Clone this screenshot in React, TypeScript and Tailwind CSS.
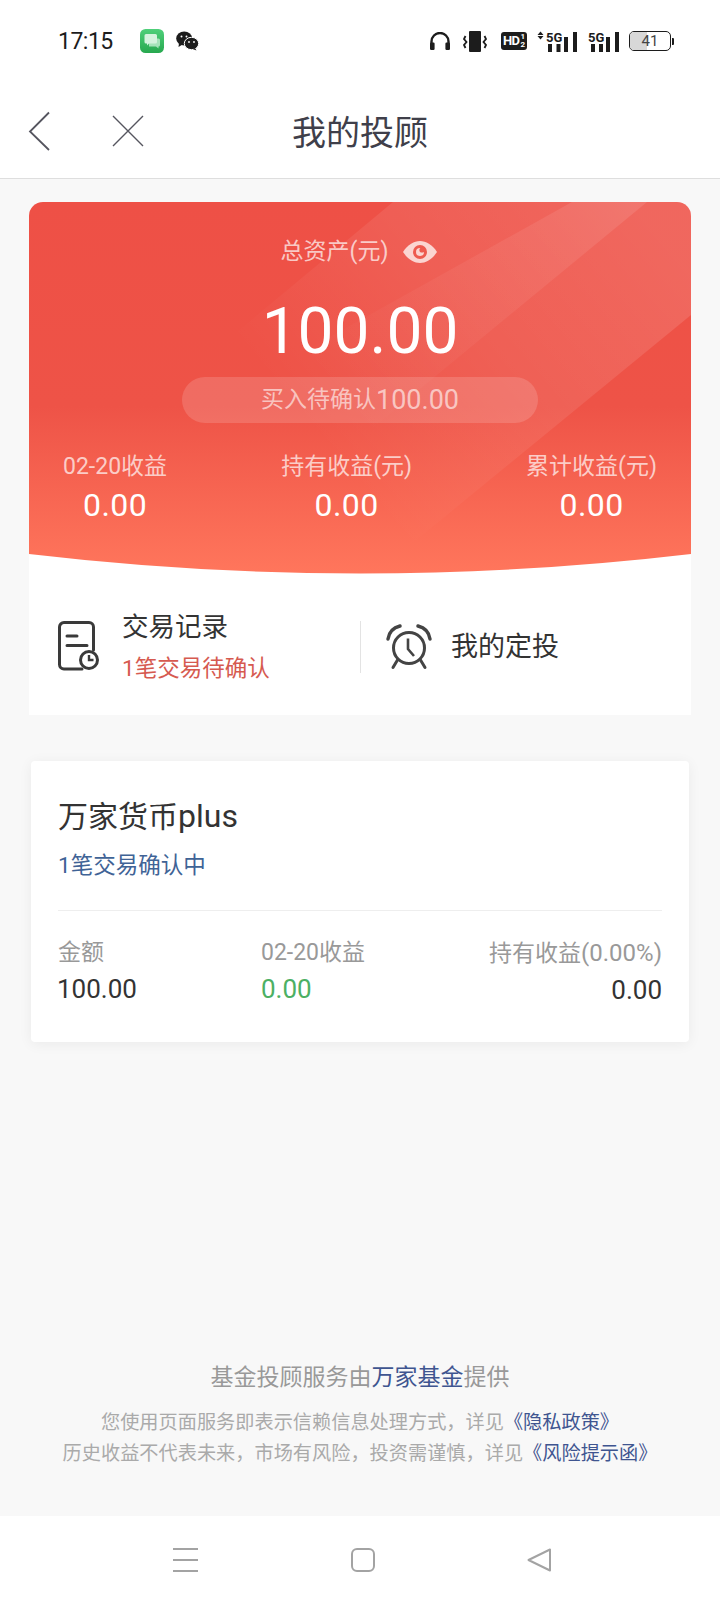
import React from "react";

const StatusBar = () => (
  <div className="flex h-[90px] items-center pl-[58px] pb-[8px] text-[#1c1c1c]">
    <span className="mt-[2px] w-[56px] text-[23px] leading-[30px] tracking-[-0.5px]">17:15</span>
    {/* messages app */}
    <svg className="ml-[26px] h-[24px] w-[24px]" viewBox="0 0 24 24">
      <defs>
        <linearGradient id="msg" x1="0" y1="0" x2="0" y2="1">
          <stop offset="0" stopColor="#4fd07a" />
          <stop offset="1" stopColor="#27a84f" />
        </linearGradient>
      </defs>
      <rect width="24" height="24" rx="5.5" fill="url(#msg)" />
      <path d="M9 9.500h9.500a1.500 1.500 0 0 1 1.500 1.500v5a1.500 1.500 0 0 1-1.500 1.500v2l-2.500-2H9z" fill="#a6e3ba" />
      <path d="M6 5h9.500A1.500 1.500 0 0 1 17 6.500V13a1.500 1.500 0 0 1-1.500 1.500H9l-2 2v-2H6A1.500 1.500 0 0 1 4.500 13V6.500A1.500 1.500 0 0 1 6 5z" fill="#d5f3de" />
    </svg>
    {/* wechat */}
    <svg className="ml-[12px] h-[20px] w-[23px]" viewBox="0 0 23 20">
      <ellipse cx="8.2" cy="7.5" rx="8" ry="7" fill="#1c1c1c" />
      <path d="M3 12l-.5 4 4-2.5z" fill="#1c1c1c" />
      <ellipse cx="15.5" cy="12.5" rx="7.2" ry="6.2" fill="#1c1c1c" stroke="#fff" strokeWidth="1" />
      <path d="M19 17l1.5 2.5-4-1.500z" fill="#1c1c1c" />
      <circle cx="5.5" cy="5.5" r="1" fill="#fff" />
      <circle cx="10.5" cy="5.5" r="1" fill="#fff" />
      <circle cx="13" cy="11" r="0.9" fill="#fff" />
      <circle cx="18" cy="11" r="0.9" fill="#fff" />
    </svg>
    <div className="ml-auto mr-[46px] flex items-center">
      <svg className="h-[18px] w-[20px]" viewBox="0 0 20 18" fill="none">
        <path d="M1.500 12V9.500a8.500 8.500 0 0 1 17 0V12" stroke="#1c1c1c" strokeWidth="2.400" />
        <rect x="0" y="10.500" width="4.600" height="7.500" rx="1.200" fill="#1c1c1c" />
        <rect x="15.400" y="10.500" width="4.600" height="7.500" rx="1.200" fill="#1c1c1c" />
      </svg>
      <svg className="ml-[13px] h-[21px] w-[24px]" viewBox="0 0 24 21" fill="none">
        <rect x="6" y="0" width="12" height="21" rx="1" fill="#1c1c1c" />
        <path d="M2.500 5L1 8l2.500 3L1 14l1.500 3M21.500 5L23 8l-2.500 3 2.500 3-1.500 3" stroke="#1c1c1c" strokeWidth="1.800" />
      </svg>
      <div className="ml-[14px] flex h-[18px] w-[26px] items-center justify-center rounded-[3px] bg-[#1c1c1c] text-white">
        <span className="text-[13px] font-bold leading-[18px] tracking-[-0.5px]">HD</span>
        <span className="ml-[1px] flex flex-col text-[8px] font-bold leading-[8px]">
          <span>1</span>
          <span>2</span>
        </span>
      </div>
      <svg className="ml-[10px] h-[21px] w-[40px]" viewBox="0 0 40 21">
        <path d="M3.500 0.500l3 3.500h-6zM3.500 8.500l3-3.500h-6z" fill="#1c1c1c" />
        <text x="9" y="10.500" fontSize="13" fontWeight="700" fill="#1c1c1c" fontFamily="Roboto">5G</text>
        <rect x="11" y="13" width="4" height="8" fill="#1c1c1c" />
        <rect x="19.500" y="13" width="4" height="8" fill="#1c1c1c" />
        <rect x="27" y="6" width="4" height="15" fill="#1c1c1c" />
        <rect x="36" y="1" width="4" height="20" fill="#1c1c1c" />
      </svg>
      <svg className="ml-[11px] h-[21px] w-[31px]" viewBox="0 0 31 21">
        <text x="0" y="10.500" fontSize="13" fontWeight="700" fill="#1c1c1c" fontFamily="Roboto">5G</text>
        <rect x="3" y="13" width="4" height="8" fill="#1c1c1c" />
        <rect x="11" y="13" width="4" height="8" fill="#1c1c1c" />
        <rect x="18" y="6" width="4" height="15" fill="#1c1c1c" />
        <rect x="27" y="1" width="4" height="20" fill="#1c1c1c" />
      </svg>
      <div className="ml-[10px] flex items-center">
        <div className="relative flex h-[20px] w-[42px] items-center justify-center overflow-hidden rounded-[5px] border-[1.5px] border-[#1c1c1c]">
          <div className="absolute inset-y-0 left-0 w-[17px] bg-[#d8d8d8]" />
          <span className="relative text-[15px] leading-none text-[#444]">41</span>
        </div>
        <div className="ml-[1px] h-[7px] w-[2px] rounded-r-[1px] bg-[#1c1c1c]" />
      </div>
    </div>
  </div>
);

const NavBar = () => (
  <div className="relative flex h-[89px] items-start justify-center border-b border-[#dedede]">
    <svg className="absolute left-[28px] top-[21px] h-[40px] w-[24px]" viewBox="0 0 24 40" fill="none">
      <path d="M21 1.500L2 20.500L21 39" stroke="#55555f" strokeWidth="1.800" />
    </svg>
    <svg className="absolute left-[112px] top-[25px] h-[32px] w-[32px]" viewBox="0 0 32 32" fill="none">
      <path d="M1 1l30 30M31 1L1 31" stroke="#55555f" strokeWidth="1.400" />
    </svg>
    <span className="mt-[19px] text-[34px] leading-[48px] text-[#3f3f4a]">我的投顾</span>
  </div>
);

const HeroArt = () => (
  <svg className="absolute inset-0 h-[372px] w-[662px]" viewBox="0 0 662 372" preserveAspectRatio="none">
    <defs>
      <linearGradient id="heroBg" x1="0" y1="0" x2="0" y2="1">
        <stop offset="0" stopColor="#ee5046" />
        <stop offset="0.55" stopColor="#ee5347" />
        <stop offset="1" stopColor="#ff765c" />
      </linearGradient>
      <linearGradient id="fadeA" gradientUnits="userSpaceOnUse" x1="600" y1="0" x2="300" y2="250">
        <stop offset="0" stopColor="#fff" stopOpacity="0.13" />
        <stop offset="0.5" stopColor="#fff" stopOpacity="0.08" />
        <stop offset="1" stopColor="#fff" stopOpacity="0" />
      </linearGradient>
      <linearGradient id="fadeB" gradientUnits="userSpaceOnUse" x1="600" y1="0" x2="330" y2="225">
        <stop offset="0" stopColor="#fff" stopOpacity="0.1" />
        <stop offset="1" stopColor="#fff" stopOpacity="0" />
      </linearGradient>
    </defs>
    <path d="M0 0H662V352Q331 391 0 352Z" fill="url(#heroBg)" />
    <path d="M364 0H662V113L330 385L100 220Z" fill="url(#fadeA)" />
    <path d="M543 0H618L300 262L220 180Z" fill="url(#fadeB)" />
  </svg>
);

const HeroStat = ({ label, value }: { label: string; value: string }) => (
  <div className="flex flex-col items-center">
    <span className="text-[23px] leading-[30px] text-white/70">{label}</span>
    <span className="mt-[5px] text-[32px] leading-[36px] tracking-[0.4px] text-white">{value}</span>
  </div>
);

const AssetCard = () => (
  <div className="ml-[29px] mt-[23px] w-[662px] overflow-hidden rounded-t-[14px] bg-white">
    <div className="relative h-[372px]">
      <HeroArt />
      <div className="relative flex flex-col items-center pt-[35px]">
        <div className="mr-[2px] flex h-[30px] items-center">
          <span className="text-[23px] leading-[30px] text-white/70">总资产(元)</span>
          <svg className="ml-[15px] h-[22px] w-[34px]" viewBox="0 0 34 22">
            <path d="M0 11C5 3.500 11 0 17 0s12 3.500 17 11c-5 7.500-11 11-17 11S5 18.500 0 11z" fill="#fbd5d1" />
            <circle cx="17" cy="11" r="7" fill="#ee5a4f" />
            <circle cx="17" cy="11" r="4" fill="#fbd5d1" />
            <circle cx="19" cy="9" r="2.600" fill="#ee5a4f" />
          </svg>
        </div>
        <span className="mt-[29px] text-[64px] leading-[72px] text-white">100.00</span>
        <div className="mt-[9px] flex h-[46px] w-[356px] items-center justify-center rounded-full bg-white/15 text-[23px] text-white/60">
          买入待确认<span className="text-[27px]">100.00</span>
        </div>
        <div className="mt-[29px] flex w-full justify-between px-[34px]">
          <HeroStat label="02-20收益" value="0.00" />
          <HeroStat label="持有收益(元)" value="0.00" />
          <HeroStat label="累计收益(元)" value="0.00" />
        </div>
      </div>
    </div>
    <div className="flex h-[141px] items-center pt-[2px]">
      <svg className="ml-[29px] h-[50px] w-[41px]" viewBox="0 0 41 50" fill="none" stroke="#3a3a3a" strokeWidth="3">
        <path d="M24 48H6a4.500 4.500 0 0 1-4.500-4.500V6A4.500 4.500 0 0 1 6 1.500h25A4.500 4.500 0 0 1 35.500 6v23" strokeLinecap="round" />
        <path d="M9 15h10M9 24.500h20" strokeLinecap="round" />
        <circle cx="31" cy="39" r="8.500" />
        <path d="M31 34v5h4.500" strokeWidth="2.400" />
      </svg>
      <div className="ml-[23px] flex w-[238px] flex-col">
        <span className="text-[26.5px] leading-[36px] text-[#333]">交易记录</span>
        <span className="mt-[8px] text-[22.5px] leading-[30px] text-[#d65a50]">1笔交易待确认</span>
      </div>
      <div className="mt-[2px] h-[52px] w-px bg-[#e3e3e3]" />
      <svg className="ml-[25px] mt-[2px] h-[46px] w-[46px]" viewBox="0 0 46 46" fill="none" stroke="#444" strokeWidth="3">
        <circle cx="23" cy="24" r="15.500" />
        <path d="M22 14.500V25l6 7" strokeWidth="2.600" />
        <path d="M2 15C3 8 8 3.500 14 2M44 15C43 8 38 3.500 32 2" strokeLinecap="round" strokeWidth="3.400" />
        <path d="M11.500 36L7 43.500M34.500 36L39 43.500" strokeLinecap="round" />
      </svg>
      <span className="ml-[19px] mt-[2px] text-[27px] leading-[36px] text-[#333]">我的定投</span>
    </div>
  </div>
);

const HoldingCol = ({
  label,
  value,
  valueClass,
  right,
}: {
  label: React.ReactNode;
  value: string;
  valueClass: string;
  right?: boolean;
}) => (
  <div className={right ? "flex flex-col items-end" : "flex flex-col items-start"}>
    <span className="text-[23px] leading-[30px] text-[#999]">{label}</span>
    <span className={"mt-[6px] text-[26px] leading-[30px] " + valueClass}>{value}</span>
  </div>
);

const HoldingCard = () => (
  <div className="ml-[31px] mt-[46px] h-[281px] w-[658px] rounded-[4px] bg-white px-[27px] pt-[33px] shadow-[0_2px_14px_rgba(0,0,0,0.06)]">
    <div className="text-[30px] leading-[44px] text-[#333]">
      万家货币<span className="text-[32px]">plus</span>
    </div>
    <div className="mt-[11px] text-[22.5px] leading-[30px] text-[#3f6396]">1笔交易确认中</div>
    <div className="mt-[30px] h-px bg-[#eeeeee]" />
    <div className="mt-[27px] flex justify-between">
      <HoldingCol label="金额" value="100.00" valueClass="-ml-[1px] text-[#333]" />
      <HoldingCol label="02-20收益" value="0.00" valueClass="text-[#4cb063]" />
      <HoldingCol
        label={
          <>
            持有收益<span className="text-[24px]">(0.00%)</span>
          </>
        }
        value="0.00"
        valueClass="text-[#333]"
        right
      />
    </div>
  </div>
);

const Footer = () => (
  <div className="mt-auto flex flex-col items-center pb-[47px] text-[#aaaaaa]">
    <div className="text-[23px] leading-[34px] text-[#999]">
      基金投顾服务由<span className="text-[#3f5590]">万家基金</span>提供
    </div>
    <div className="mt-[12px] text-[19.2px] leading-[31px]">
      您使用页面服务即表示信赖信息处理方式，详见<span className="text-[#3f5590]">《隐私政策》</span>
    </div>
    <div className="text-[19.2px] leading-[31px]">
      历史收益不代表未来，市场有风险，投资需谨慎，详见<span className="text-[#3f5590]">《风险提示函》</span>
    </div>
  </div>
);

const BottomBar = () => (
  <div className="flex h-[88px] items-start bg-white pt-[32px]">
    <svg className="ml-[173px] h-[24px] w-[25px]" viewBox="0 0 25 24" fill="none" stroke="#a3a3a3" strokeWidth="2">
      <path d="M0 1h25M0 12h25M0 23h25" />
    </svg>
    <svg className="ml-[153px] h-[24px] w-[24px]" viewBox="0 0 24 24" fill="none" stroke="#a3a3a3" strokeWidth="2">
      <rect x="1" y="1" width="22" height="22" rx="5" />
    </svg>
    <svg className="ml-[152px] h-[24px] w-[24px]" viewBox="0 0 24 24" fill="none" stroke="#a3a3a3" strokeWidth="2" strokeLinejoin="round">
      <path d="M23 1.500V22.500L1.500 12Z" />
    </svg>
  </div>
);

const App: React.FC = () => {
  return (
    <div className="flex h-[1604px] w-[720px] flex-col overflow-hidden bg-[#f8f8f8] font-['Roboto','Noto_Sans_CJK_SC',sans-serif]">
      <div className="bg-white">
        <StatusBar />
        <NavBar />
      </div>
      <AssetCard />
      <HoldingCard />
      <Footer />
      <BottomBar />
    </div>
  );
};

export default App;
